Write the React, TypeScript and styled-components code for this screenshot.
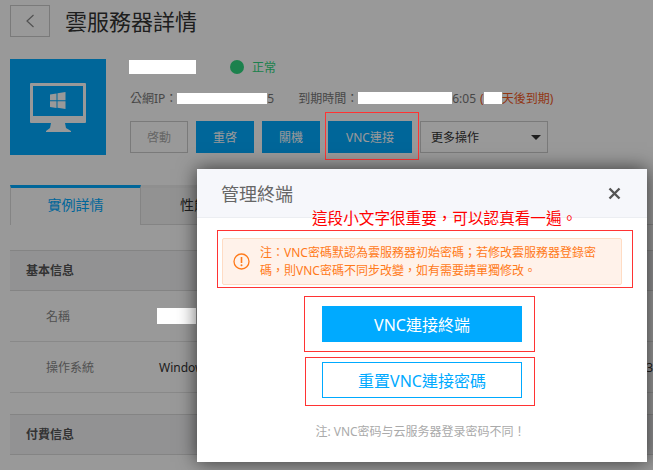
import React from 'react';
import styled, { createGlobalStyle } from 'styled-components';

const GlobalStyle = createGlobalStyle`
  html, body {
    margin: 0;
    padding: 0;
    background: #fff;
  }

  body {
    font-family: "Noto Sans", "Noto Sans CJK TC", sans-serif;
    color: #333;
  }
`;

const Viewport = styled.div`
  position: relative;
  width: 653px;
  height: 470px;
  overflow: hidden;
`;

const Overlay = styled.div`
  position: absolute;
  inset: 0;
  z-index: 10;
  background: rgba(0, 0, 0, 0.4);
`;

const Redact = styled.span<{ $w: number; $h: number; $shift?: number }>`
  position: relative;
  z-index: 11;
  display: inline-block;
  flex: none;
  width: ${(p) => p.$w}px;
  height: ${(p) => p.$h}px;
  margin-left: ${(p) => p.$shift ?? 0}px;
  background: #fff;
`;

const Header = styled.header`
  display: flex;
  align-items: center;
  gap: 15px;
  padding: 5px 10px 0;
`;

const BackButton = styled.button`
  display: flex;
  align-items: center;
  justify-content: center;
  width: 40px;
  height: 32px;
  padding: 0;
  border: 1px solid #ccc;
  background: #fff;
`;

const Title = styled.h1`
  margin: 0;
  font-size: 22px;
  font-weight: 400;
  line-height: 32px;
  color: #333;
`;

const Summary = styled.section`
  display: flex;
  gap: 24px;
  margin: 22px 10px 0;
`;

const ServerIcon = styled.div`
  display: flex;
  align-items: center;
  justify-content: center;
  flex: none;
  width: 96px;
  height: 96px;
  background: #00aaff;
`;

const Info = styled.div`
  display: flex;
  flex-direction: column;
`;

const NameRow = styled.div`
  display: flex;
  align-items: center;
  height: 16px;
`;

const StatusDot = styled.i`
  width: 14px;
  height: 14px;
  margin-left: 34px;
  border-radius: 50%;
  background: #30d880;
`;

const StatusText = styled.span`
  margin-left: 8px;
  font-size: 12px;
  color: #30d880;
`;

const MetaRow = styled.div`
  display: flex;
  align-items: center;
  height: 14px;
  margin-top: 16px;
  font-size: 12px;
  white-space: nowrap;
  color: #777;
`;

const MetaLabel = styled.span`
  margin-left: 24px;
`;

const Expire = styled.span<{ $gap?: number }>`
  margin-left: ${(p) => p.$gap ?? 0}px;
  color: #f25a1f;
`;

const Actions = styled.div`
  display: flex;
  gap: 8px;
  margin-top: 16px;
`;

const ActionButton = styled.button<{ $disabled?: boolean; $width?: number }>`
  width: ${(p) => p.$width ?? 58}px;
  height: 32px;
  padding: 0;
  border: 1px solid ${(p) => (p.$disabled ? '#ccc' : '#00aaff')};
  background: ${(p) => (p.$disabled ? '#fff' : '#00aaff')};
  font: inherit;
  font-size: 12px;
  color: ${(p) => (p.$disabled ? '#aaa' : '#fff')};
`;

const Highlight = styled.div`
  position: absolute;
  z-index: 11;
  left: 325px;
  top: 112px;
  width: 94px;
  height: 48px;
  box-sizing: border-box;
  border: 1px solid #f33;
`;

const MoreButton = styled.button`
  display: flex;
  align-items: center;
  justify-content: space-between;
  box-sizing: border-box;
  width: 128px;
  height: 32px;
  padding: 0 6px 0 10px;
  border: 1px solid #ccc;
  background: #fff;
  font: inherit;
  font-size: 12px;
  color: #333;
`;

const Caret = styled.i`
  width: 0;
  height: 0;
  border-left: 5px solid transparent;
  border-right: 5px solid transparent;
  border-top: 5px solid #333;
`;

const Tabs = styled.nav`
  display: flex;
  height: 39px;
  margin: 30px 0 0 10px;
  border-bottom: 1px solid #ddd;
`;

const Tab = styled.div<{ $active?: boolean }>`
  box-sizing: border-box;
  width: 131px;
  height: ${(p) => (p.$active ? 40 : 39)}px;
  padding-left: ${(p) => (p.$active ? 0 : 38)}px;
  border-top: 3px solid ${(p) => (p.$active ? '#00aaff' : '#eee')};
  border-left: 1px solid ${(p) => (p.$active ? '#ddd' : 'transparent')};
  border-right: 1px solid #ddd;
  background: ${(p) => (p.$active ? '#fff' : '#f3f3f3')};
  font-size: 14px;
  line-height: 33px;
  text-align: ${(p) => (p.$active ? 'center' : 'left')};
  color: ${(p) => (p.$active ? '#00aaff' : '#333')};
`;

const Section = styled.section<{ $top: number }>`
  margin: ${(p) => p.$top}px 0 0 10px;
`;

const SectionHead = styled.div`
  box-sizing: border-box;
  height: 41px;
  padding-left: 16px;
  border-top: 1px solid #ddd;
  border-bottom: 1px solid #ddd;
  background: #f3f4f6;
  font-size: 12px;
  font-weight: 700;
  line-height: 39px;
  color: #555;
`;

const Row = styled.div`
  display: flex;
  align-items: center;
  box-sizing: border-box;
  height: 51px;
  padding-left: 36px;
  border-bottom: 1px solid #e4e4e4;
  font-size: 12px;
`;

const RowLabel = styled.span`
  flex: none;
  width: 113px;
  color: #888;
`;

const RowValue = styled.span`
  flex: 1;
  display: flex;
  justify-content: space-between;
  color: #333;
`;

const Modal = styled.div`
  position: absolute;
  z-index: 20;
  left: 197px;
  top: 169px;
  width: 450px;
  height: 293px;
  background: #fff;
  box-shadow: 0 0 18px rgba(0, 0, 0, 0.65);
`;

const ModalHead = styled.div`
  display: flex;
  align-items: center;
  justify-content: space-between;
  box-sizing: border-box;
  height: 49px;
  padding: 0 26px 0 24px;
  border-bottom: 1px solid #eceef2;
  background: #f6f7fb;
`;

const ModalTitle = styled.h2`
  margin: 0;
  font-size: 18px;
  font-weight: 400;
  color: #666;
`;

const CloseIcon = styled.svg`
  display: block;
  width: 13px;
  height: 13px;
`;

const Annotation = styled.div`
  position: absolute;
  left: 115px;
  top: 37px;
  font-size: 15.6px;
  line-height: 24px;
  white-space: nowrap;
  color: #f00;
`;

const NoteFrame = styled.div`
  box-sizing: border-box;
  width: 416px;
  height: 58px;
  margin: 12px 0 0 20px;
  padding: 7px 10px 2px 4px;
  border: 1px solid #f33;
`;

const Notice = styled.div`
  display: flex;
  align-items: center;
  gap: 10px;
  box-sizing: border-box;
  height: 47px;
  padding-left: 10px;
  border: 1px solid #ffdcc4;
  border-radius: 2px;
  background: #fff2ea;
`;

const NoticeIcon = styled.svg`
  flex: none;
  width: 17px;
  height: 17px;
`;

const NoticeText = styled.p`
  margin: 0;
  font-size: 12px;
  line-height: 18px;
  white-space: nowrap;
  color: #ff7a1a;
`;

const ButtonFrame = styled.div<{ $height: number; $left: number; $top: number; $pad: number }>`
  display: flex;
  align-items: flex-start;
  box-sizing: border-box;
  width: ${(p) => 338 - p.$left}px;
  height: ${(p) => p.$height}px;
  margin: ${(p) => p.$top}px 0 0 ${(p) => p.$left}px;
  padding: ${(p) => p.$pad}px 0 0 ${(p) => 124 - p.$left}px;
  border: 1px solid #f33;
`;

const ModalButton = styled.button<{ $outline?: boolean }>`
  flex: none;
  width: 200px;
  height: 36px;
  padding: 0;
  border: 1px solid #00aaff;
  background: ${(p) => (p.$outline ? '#fff' : '#00aaff')};
  font: inherit;
  font-size: 16px;
  color: ${(p) => (p.$outline ? '#00aaff' : '#fff')};
`;

const Footnote = styled.p`
  box-sizing: border-box;
  width: 450px;
  margin: 17px 0 0;
  padding-right: 3px;
  font-size: 12px;
  line-height: 18px;
  text-align: center;
  color: #aaa;
`;

const MonitorIcon = () => (
  <svg width="56" height="49" viewBox="0 0 56 49" aria-hidden="true">
    <path
      fill="#fff"
      fillRule="evenodd"
      d="M1 0h54a1 1 0 0 1 1 1v38a1 1 0 0 1-1 1H1a1 1 0 0 1-1-1V1a1 1 0 0 1 1-1zM3 3v30h50V3z"
    />
    <path fill="#fff" d="M21 40h14l1 5 5 3v1H16v-1l4-3z" />
    <path fill="#fff" d="M20 11.500l6.500-1v6.800H20zM27.500 10.300l8-1.300v8.300h-8zM20 18.300h6.500v6.800l-6.500-1zM27.500 18.300h8V26l-8-1.200z" />
  </svg>
);

const App = () => (
  <Viewport>
    <GlobalStyle />

    <Header>
      <BackButton aria-label="Back">
        <svg width="10" height="14" viewBox="0 0 10 14" aria-hidden="true">
          <path d="M8.500 1 2 7l6.500 6" fill="none" stroke="#888" strokeWidth="1.200" />
        </svg>
      </BackButton>
      <Title>雲服務器詳情</Title>
    </Header>

    <Summary>
      <ServerIcon>
        <MonitorIcon />
      </ServerIcon>
      <Info>
        <NameRow>
          <Redact $w={67} $h={14} $shift={-1} />
          <StatusDot />
          <StatusText>正常</StatusText>
        </NameRow>
        <MetaRow>
          <span>公網IP：</span>
          <Redact $w={90} $h={11} />
          <span>5</span>
          <MetaLabel>到期時間：</MetaLabel>
          <Redact $w={94} $h={12} />
          <span>6:05</span>
          <Expire $gap={4}>(</Expire>
          <Redact $w={18} $h={12} />
          <Expire>天後到期)</Expire>
        </MetaRow>
        <Actions>
          <ActionButton $disabled>啓動</ActionButton>
          <ActionButton>重啓</ActionButton>
          <ActionButton>關機</ActionButton>
          <ActionButton $width={84}>VNC連接</ActionButton>
          <MoreButton>
            更多操作
            <Caret />
          </MoreButton>
        </Actions>
      </Info>
    </Summary>

    <Tabs>
      <Tab $active>實例詳情</Tab>
      <Tab>性能</Tab>
    </Tabs>

    <Section $top={25}>
      <SectionHead>基本信息</SectionHead>
      <Row>
        <RowLabel>名稱</RowLabel>
        <Redact $w={39} $h={16} $shift={-2} />
      </Row>
      <Row>
        <RowLabel>操作系統</RowLabel>
        <RowValue>
          <span>Windows</span>
          <span>3</span>
        </RowValue>
      </Row>
    </Section>

    <Section $top={21}>
      <SectionHead>付費信息</SectionHead>
    </Section>

    <Overlay />
    <Highlight />

    <Modal>
      <ModalHead>
        <ModalTitle>管理終端</ModalTitle>
        <CloseIcon viewBox="0 0 13 13" aria-label="Close">
          <path d="M1.500 1.500l10 10M11.500 1.500l-10 10" stroke="#555" strokeWidth="2.400" fill="none" />
        </CloseIcon>
      </ModalHead>
      <Annotation>這段小文字很重要，可以認真看一遍。</Annotation>

      <NoteFrame>
        <Notice>
          <NoticeIcon viewBox="0 0 17 17" aria-hidden="true">
            <circle cx="8.500" cy="8.500" r="7.500" fill="none" stroke="#ff7a1a" strokeWidth="1.300" />
            <path d="M8.500 4v6" stroke="#ff7a1a" strokeWidth="1.600" />
            <circle cx="8.500" cy="12.300" r="1" fill="#ff7a1a" />
          </NoticeIcon>
          <NoticeText>
            注：VNC密碼默認為雲服務器初始密碼；若修改雲服務器登錄密
            <br />
            碼，則VNC密碼不同步改變，如有需要請單獨修改。
          </NoticeText>
        </Notice>
      </NoteFrame>

      <ButtonFrame $height={56} $left={107} $top={8} $pad={9}>
        <ModalButton>VNC連接終端</ModalButton>
      </ButtonFrame>
      <ButtonFrame $height={49} $left={108} $top={5} $pad={4}>
        <ModalButton $outline>重置VNC連接密碼</ModalButton>
      </ButtonFrame>

      <Footnote>注: VNC密码与云服务器登录密码不同！</Footnote>
    </Modal>
  </Viewport>
);

export default App;
